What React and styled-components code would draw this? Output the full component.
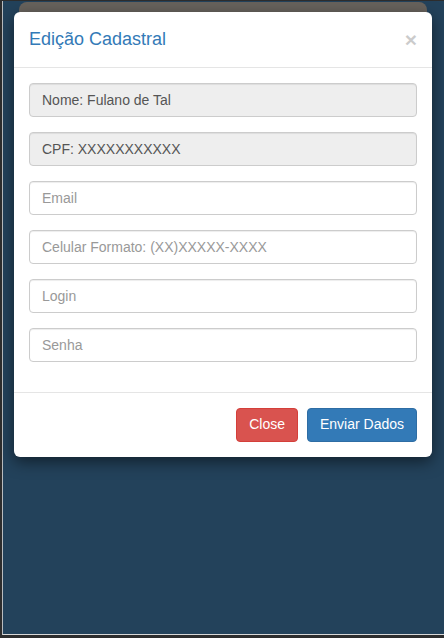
import React from 'react';
import styled, { createGlobalStyle } from 'styled-components';

const GlobalStyle = createGlobalStyle`
  html, body {
    margin: 0;
    padding: 0;
    background: #2d2d2d;
    font-family: "Liberation Sans", Arial, Helvetica, sans-serif;
    font-size: 14px;
    line-height: 1.42857;
    color: #333;
  }
  * { box-sizing: border-box; }
`;

const Frame = styled.div`
  margin: 1px 0 0 2px;
  height: 634px;
  background: #23425b;
  border-left: 1px solid #b9bcbf;
  border-bottom: 1px solid #d8d8d8;
  padding: 1px 12px 0 11px;
`;

const BackPanel = styled.div`
  height: 10px;
  margin: 0 5px;
  background: #67625c;
  border-radius: 8px 8px 0 0;
`;

const Modal = styled.div`
  background: #fff;
  border-radius: 6px;
  box-shadow: 0 5px 15px rgba(0, 0, 0, 0.5);
`;

const Header = styled.div`
  display: flex;
  align-items: flex-start;
  justify-content: space-between;
  padding: 15px 15px 14px;
  border-bottom: 1px solid #e5e5e5;
`;

const Title = styled.h4`
  margin: 0;
  font-size: 18px;
  font-weight: 500;
  line-height: 1.42857;
  color: #337ab7;
`;

const CloseX = styled.button`
  background: none;
  border: 0;
  padding: 0;
  margin-top: 2px;
  font-family: inherit;
  font-size: 21px;
  font-weight: bold;
  line-height: 1;
  color: #000;
  opacity: 0.2;
  cursor: pointer;
`;

const Body = styled.div`
  padding: 15px;
  display: flex;
  flex-direction: column;
  gap: 15px;
  padding-bottom: 30px;
`;

const Input = styled.input`
  display: block;
  width: 100%;
  height: 34px;
  padding: 6px 12px;
  font-family: inherit;
  font-size: 14px;
  color: #555;
  background: ${p => (p.disabled ? '#eee' : '#fff')};
  border: 1px solid #ccc;
  border-radius: 4px;
  box-shadow: inset 0 1px 1px rgba(0, 0, 0, 0.075);
  opacity: 1;
  -webkit-text-fill-color: #555;

  &::placeholder {
    color: #999;
    -webkit-text-fill-color: #999;
  }
`;

const Footer = styled.div`
  display: flex;
  justify-content: flex-end;
  gap: 9px;
  padding: 15px;
  border-top: 1px solid #e5e5e5;
`;

const Button = styled.button`
  padding: 6px 12px;
  font-family: inherit;
  font-size: 14px;
  line-height: 1.42857;
  color: #fff;
  border-radius: 4px;
  border: 1px solid ${p => (p.$variant === 'danger' ? '#d43f3a' : '#2e6da4')};
  background: ${p => (p.$variant === 'danger' ? '#d9534f' : '#337ab7')};
  cursor: pointer;
`;

export default function App() {
  return (
    <>
      <GlobalStyle />
      <Frame>
        <BackPanel />
        <Modal>
          <Header>
            <Title>Edição Cadastral</Title>
            <CloseX aria-label="Close">×</CloseX>
          </Header>
          <Body>
            <Input disabled value="Nome: Fulano de Tal" readOnly />
            <Input disabled value="CPF: XXXXXXXXXXX" readOnly />
            <Input type="email" placeholder="Email" />
            <Input type="text" placeholder="Celular Formato: (XX)XXXXX-XXXX" />
            <Input type="text" placeholder="Login" />
            <Input type="password" placeholder="Senha" />
          </Body>
          <Footer>
            <Button $variant="danger">Close</Button>
            <Button $variant="primary">Enviar Dados</Button>
          </Footer>
        </Modal>
      </Frame>
    </>
  );
}
